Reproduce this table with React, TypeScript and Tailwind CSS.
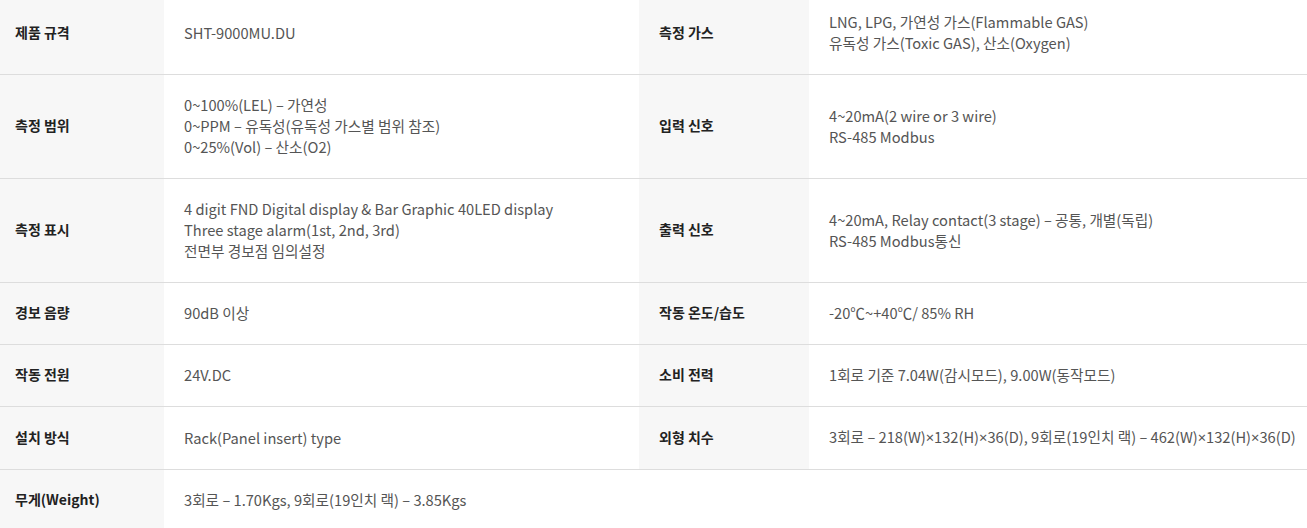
import React from 'react';

type Spec = { label: string; value: React.ReactNode[] };

const X = () => <span style={{ fontFamily: '"Noto Sans", sans-serif' }}>×</span>;

const rows: [Spec, Spec | null][] = [
  [
    { label: '제품 규격', value: ['SHT-9000MU.DU'] },
    { label: '측정 가스', value: ['LNG, LPG, 가연성 가스(Flammable GAS)', '유독성 가스(Toxic GAS), 산소(Oxygen)'] },
  ],
  [
    { label: '측정 범위', value: ['0~100%(LEL) – 가연성', '0~PPM – 유독성(유독성 가스별 범위 참조)', '0~25%(Vol) – 산소(O2)'] },
    { label: '입력 신호', value: ['4~20mA(2 wire or 3 wire)', 'RS-485 Modbus'] },
  ],
  [
    { label: '측정 표시', value: ['4 digit FND Digital display & Bar Graphic 40LED display', 'Three stage alarm(1st, 2nd, 3rd)', '전면부 경보점 임의설정'] },
    { label: '출력 신호', value: ['4~20mA, Relay contact(3 stage) – 공통, 개별(독립)', 'RS-485 Modbus통신'] },
  ],
  [
    { label: '경보 음량', value: ['90dB 이상'] },
    { label: '작동 온도/습도', value: ['-20℃~+40℃/ 85% RH'] },
  ],
  [
    { label: '작동 전원', value: ['24V.DC'] },
    { label: '소비 전력', value: ['1회로 기준 7.04W(감시모드), 9.00W(동작모드)'] },
  ],
  [
    { label: '설치 방식', value: ['Rack(Panel insert) type'] },
    {
      label: '외형 치수',
      value: [
        <>
          3회로 – 218(W)<X />132(H)<X />36(D), 9회로(19인치 랙) – 462(W)<X />132(H)<X />36(D)
        </>,
      ],
    },
  ],
  [{ label: '무게(Weight)', value: ['3회로 – 1.70Kgs, 9회로(19인치 랙) – 3.85Kgs'] }, null],
];

const Label = ({ text, first }: { text: string; first?: boolean }) => (
  <div
    className={`flex items-center bg-[#f7f7f7] pt-[19px] pb-[21px] text-[14px] font-bold text-[#222] ${first ? 'pl-[15px]' : 'pl-5'}`}
  >
    {text}
  </div>
);

const Value = ({ lines }: { lines: React.ReactNode[] }) => (
  <div className="flex flex-col justify-center pt-[19px] pb-[21px] pl-5 text-[14.67px] text-[#555]">
    {lines.map((l, i) => (
      <div key={i} className="whitespace-nowrap">{l}</div>
    ))}
  </div>
);

export default function App() {
  return (
    <div
      className="h-[528px] w-[1307px] overflow-hidden bg-white leading-[21px]"
      style={{ fontFamily: '"Noto Sans CJK KR", "Noto Sans", sans-serif' }}
    >
      <div className="-mt-[8px]">
        {rows.map(([left, right], i) => (
          <div
            key={i}
            className={`grid grid-cols-[164px_475px_170px_1fr] ${i < rows.length - 1 ? 'border-b border-[#dddddd]' : ''}`}
          >
            <Label text={left.label} first />
            <Value lines={left.value} />
            {right ? (
              <>
                <Label text={right.label} />
                <Value lines={right.value} />
              </>
            ) : (
              <>
                <div />
                <div />
              </>
            )}
          </div>
        ))}
      </div>
    </div>
  );
}
